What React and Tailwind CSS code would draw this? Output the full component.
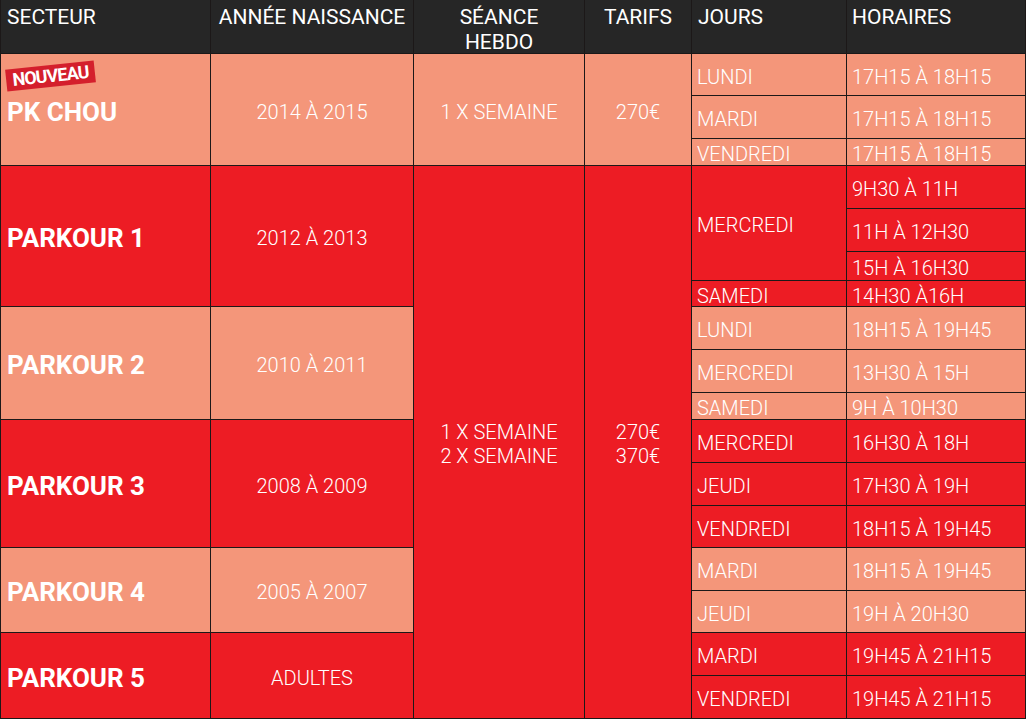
import React from 'react';

const RED = 'bg-[#ed1c24]';
const SAL = 'bg-[#f4967a]';

const secteurs = [
  { name: 'PK CHOU', pos: 'row-start-2 row-span-3', bg: SAL, annee: '2014 À 2015', badge: true },
  { name: 'PARKOUR 1', pos: 'row-start-5 row-span-4', bg: RED, annee: '2012 À 2013' },
  { name: 'PARKOUR 2', pos: 'row-start-9 row-span-3', bg: SAL, annee: '2010 À 2011' },
  { name: 'PARKOUR 3', pos: 'row-start-12 row-span-3', bg: RED, annee: '2008 À 2009' },
  { name: 'PARKOUR 4', pos: 'row-start-15 row-span-2', bg: SAL, annee: '2005 À 2007' },
  { name: 'PARKOUR 5', pos: 'row-start-17 row-span-2', bg: RED, annee: 'ADULTES' },
];

const jours = [
  { j: 'LUNDI', pos: 'row-start-2', bg: SAL },
  { j: 'MARDI', pos: 'row-start-3', bg: SAL },
  { j: 'VENDREDI', pos: 'row-start-4', bg: SAL },
  { j: 'MERCREDI', pos: 'row-start-5 row-span-3', bg: RED },
  { j: 'SAMEDI', pos: 'row-start-8', bg: RED },
  { j: 'LUNDI', pos: 'row-start-9', bg: SAL },
  { j: 'MERCREDI', pos: 'row-start-10', bg: SAL },
  { j: 'SAMEDI', pos: 'row-start-11', bg: SAL },
  { j: 'MERCREDI', pos: 'row-start-12', bg: RED },
  { j: 'JEUDI', pos: 'row-start-13', bg: RED },
  { j: 'VENDREDI', pos: 'row-start-14', bg: RED },
  { j: 'MARDI', pos: 'row-start-15', bg: SAL },
  { j: 'JEUDI', pos: 'row-start-16', bg: SAL },
  { j: 'MARDI', pos: 'row-start-17', bg: RED },
  { j: 'VENDREDI', pos: 'row-start-18', bg: RED },
];

const horaires = [
  { h: '17H15 À 18H15', pos: 'row-start-2', bg: SAL },
  { h: '17H15 À 18H15', pos: 'row-start-3', bg: SAL },
  { h: '17H15 À 18H15', pos: 'row-start-4', bg: SAL },
  { h: '9H30 À 11H', pos: 'row-start-5', bg: RED },
  { h: '11H À 12H30', pos: 'row-start-6', bg: RED },
  { h: '15H À 16H30', pos: 'row-start-7', bg: RED },
  { h: '14H30 À16H', pos: 'row-start-8', bg: RED },
  { h: '18H15 À 19H45', pos: 'row-start-9', bg: SAL },
  { h: '13H30 À 15H', pos: 'row-start-10', bg: SAL },
  { h: '9H À 10H30', pos: 'row-start-11', bg: SAL },
  { h: '16H30 À 18H', pos: 'row-start-12', bg: RED },
  { h: '17H30 À 19H', pos: 'row-start-13', bg: RED },
  { h: '18H15 À 19H45', pos: 'row-start-14', bg: RED },
  { h: '18H15 À 19H45', pos: 'row-start-15', bg: SAL },
  { h: '19H À 20H30', pos: 'row-start-16', bg: SAL },
  { h: '19H45 À 21H15', pos: 'row-start-17', bg: RED },
  { h: '19H45 À 21H15', pos: 'row-start-18', bg: RED },
];

export default function App() {
  return (
    <div className="bg-white min-h-[719px] font-['Roboto','Liberation_Sans',sans-serif] text-white">
      <div className="w-[1026px] grid gap-px bg-[#1c1818] border-x border-b border-[#1c1818] grid-cols-[209px_202px_170px_106px_154px_178px] grid-rows-[53px_41px_42px_26px_42px_42px_28px_25px_42px_42px_26px_42px_42px_41px_42px_41px_42px_42px]">
        {/* en-tête */}
        <div className="col-start-1 row-start-1 bg-[#262626] pl-[6px] pt-[5px] text-[21px] leading-[25px]">SECTEUR</div>
        <div className="col-start-2 row-start-1 bg-[#262626] pt-[5px] text-center text-[21px] leading-[25px]">ANNÉE NAISSANCE</div>
        <div className="col-start-3 row-start-1 bg-[#262626] pt-[5px] text-center text-[21px] leading-[25px]">
          SÉANCE<br />HEBDO
        </div>
        <div className="col-start-4 row-start-1 bg-[#262626] pt-[5px] text-center text-[21px] leading-[25px]">TARIFS</div>
        <div className="col-start-5 row-start-1 bg-[#262626] pl-[6px] pt-[5px] text-[21px] leading-[25px]">JOURS</div>
        <div className="col-start-6 row-start-1 bg-[#262626] pl-[5px] pt-[5px] text-[21px] leading-[25px]">HORAIRES</div>

        {secteurs.map((s) => (
          <React.Fragment key={s.name}>
            <div className={`col-start-1 ${s.pos} ${s.bg} relative flex items-center pl-[6px] pt-[4px] text-[26px] font-bold leading-none`}>
              {s.badge && (
                <div className="absolute left-[5px] top-[11px] w-[89px] h-[22px] -rotate-6 bg-[#d41f2c] flex items-center justify-center text-[18px] font-bold leading-none tracking-tighter">
                  NOUVEAU
                </div>
              )}
              {s.name}
            </div>
            <div className={`col-start-2 ${s.pos} ${s.bg} flex items-center justify-center pt-[4px] text-[20px] font-light leading-none`}>
              {s.annee}
            </div>
          </React.Fragment>
        ))}

        <div className={`col-start-3 row-start-2 row-span-3 ${SAL} flex items-center justify-center pt-[4px] text-[20px] font-light leading-none`}>
          1 X SEMAINE
        </div>
        <div className={`col-start-4 row-start-2 row-span-3 ${SAL} flex items-center justify-center pt-[4px] text-[20px] font-light leading-none`}>
          270€
        </div>
        <div className={`col-start-3 row-start-5 row-span-14 ${RED} flex flex-col items-center justify-center pt-[4px] text-[20px] font-light leading-[24px]`}>
          <span>1 X SEMAINE</span>
          <span>2 X SEMAINE</span>
        </div>
        <div className={`col-start-4 row-start-5 row-span-14 ${RED} flex flex-col items-center justify-center pt-[4px] text-[20px] font-light leading-[24px]`}>
          <span>270€</span>
          <span>370€</span>
        </div>

        {jours.map((d, i) => (
          <div key={'j' + i} className={`col-start-5 ${d.pos} ${d.bg} flex items-center pl-[5px] pt-[4px] text-[20px] font-light leading-none overflow-hidden`}>
            {d.j}
          </div>
        ))}
        {horaires.map((d, i) => (
          <div key={'h' + i} className={`col-start-6 ${d.pos} ${d.bg} flex items-center pl-[5px] pt-[4px] text-[20px] font-light leading-none overflow-hidden`}>
            {d.h}
          </div>
        ))}
      </div>
    </div>
  );
}
